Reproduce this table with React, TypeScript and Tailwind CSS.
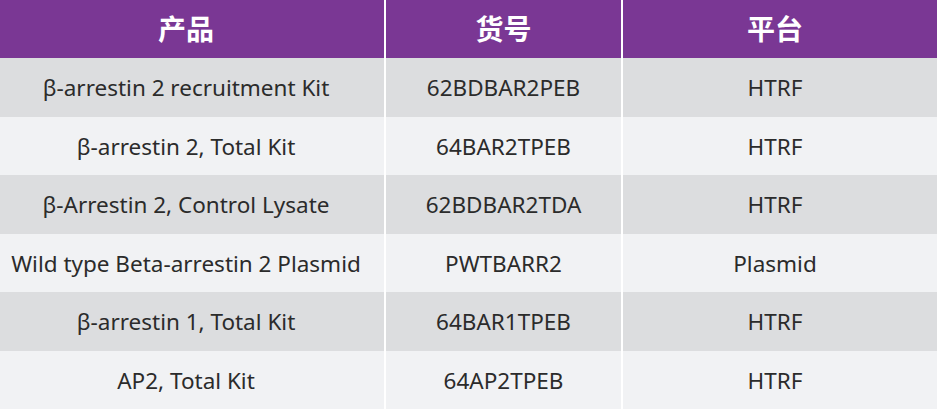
const rows = [
  ["β-arrestin 2 recruitment Kit", "62BDBAR2PEB", "HTRF"],
  ["β-arrestin 2, Total Kit", "64BAR2TPEB", "HTRF"],
  ["β-Arrestin 2, Control Lysate", "62BDBAR2TDA", "HTRF"],
  ["Wild type Beta-arrestin 2 Plasmid", "PWTBARR2", "Plasmid"],
  ["β-arrestin 1, Total Kit", "64BAR1TPEB", "HTRF"],
  ["AP2, Total Kit", "64AP2TPEB", "HTRF"],
]

// first and last columns sit a little left of centre in the source
const colPad = ["pr-[12px]", "", "pr-[10px]"]

export default function App() {
  return (
    <div className="w-[939px] h-[409px] bg-white pr-[2px] overflow-hidden">
      <div
        className="grid grid-cols-[384px_235px_1fr] gap-x-[2px] text-[#2b2b2b]"
        style={{ fontFamily: '"Noto Sans", "Noto Sans CJK SC", sans-serif' }}
      >
        {["产品", "货号", "平台"].map((h, j) => (
          <div
            key={h}
            className={
              "h-[58px] bg-[#7a3794] text-white font-bold text-[28px] flex items-center justify-center " +
              colPad[j]
            }
          >
            {h}
          </div>
        ))}
        {rows.map((r, i) =>
          r.map((c, j) => (
            <div
              key={i + "-" + j}
              className={
                "h-[58.5px] flex items-center justify-center pt-[2px] text-[22.5px] whitespace-nowrap " +
                colPad[j] +
                " " +
                (i % 2 === 0 ? "bg-[#dcdddf]" : "bg-[#f1f2f4]")
              }
            >
              {c}
            </div>
          ))
        )}
      </div>
    </div>
  )
}
